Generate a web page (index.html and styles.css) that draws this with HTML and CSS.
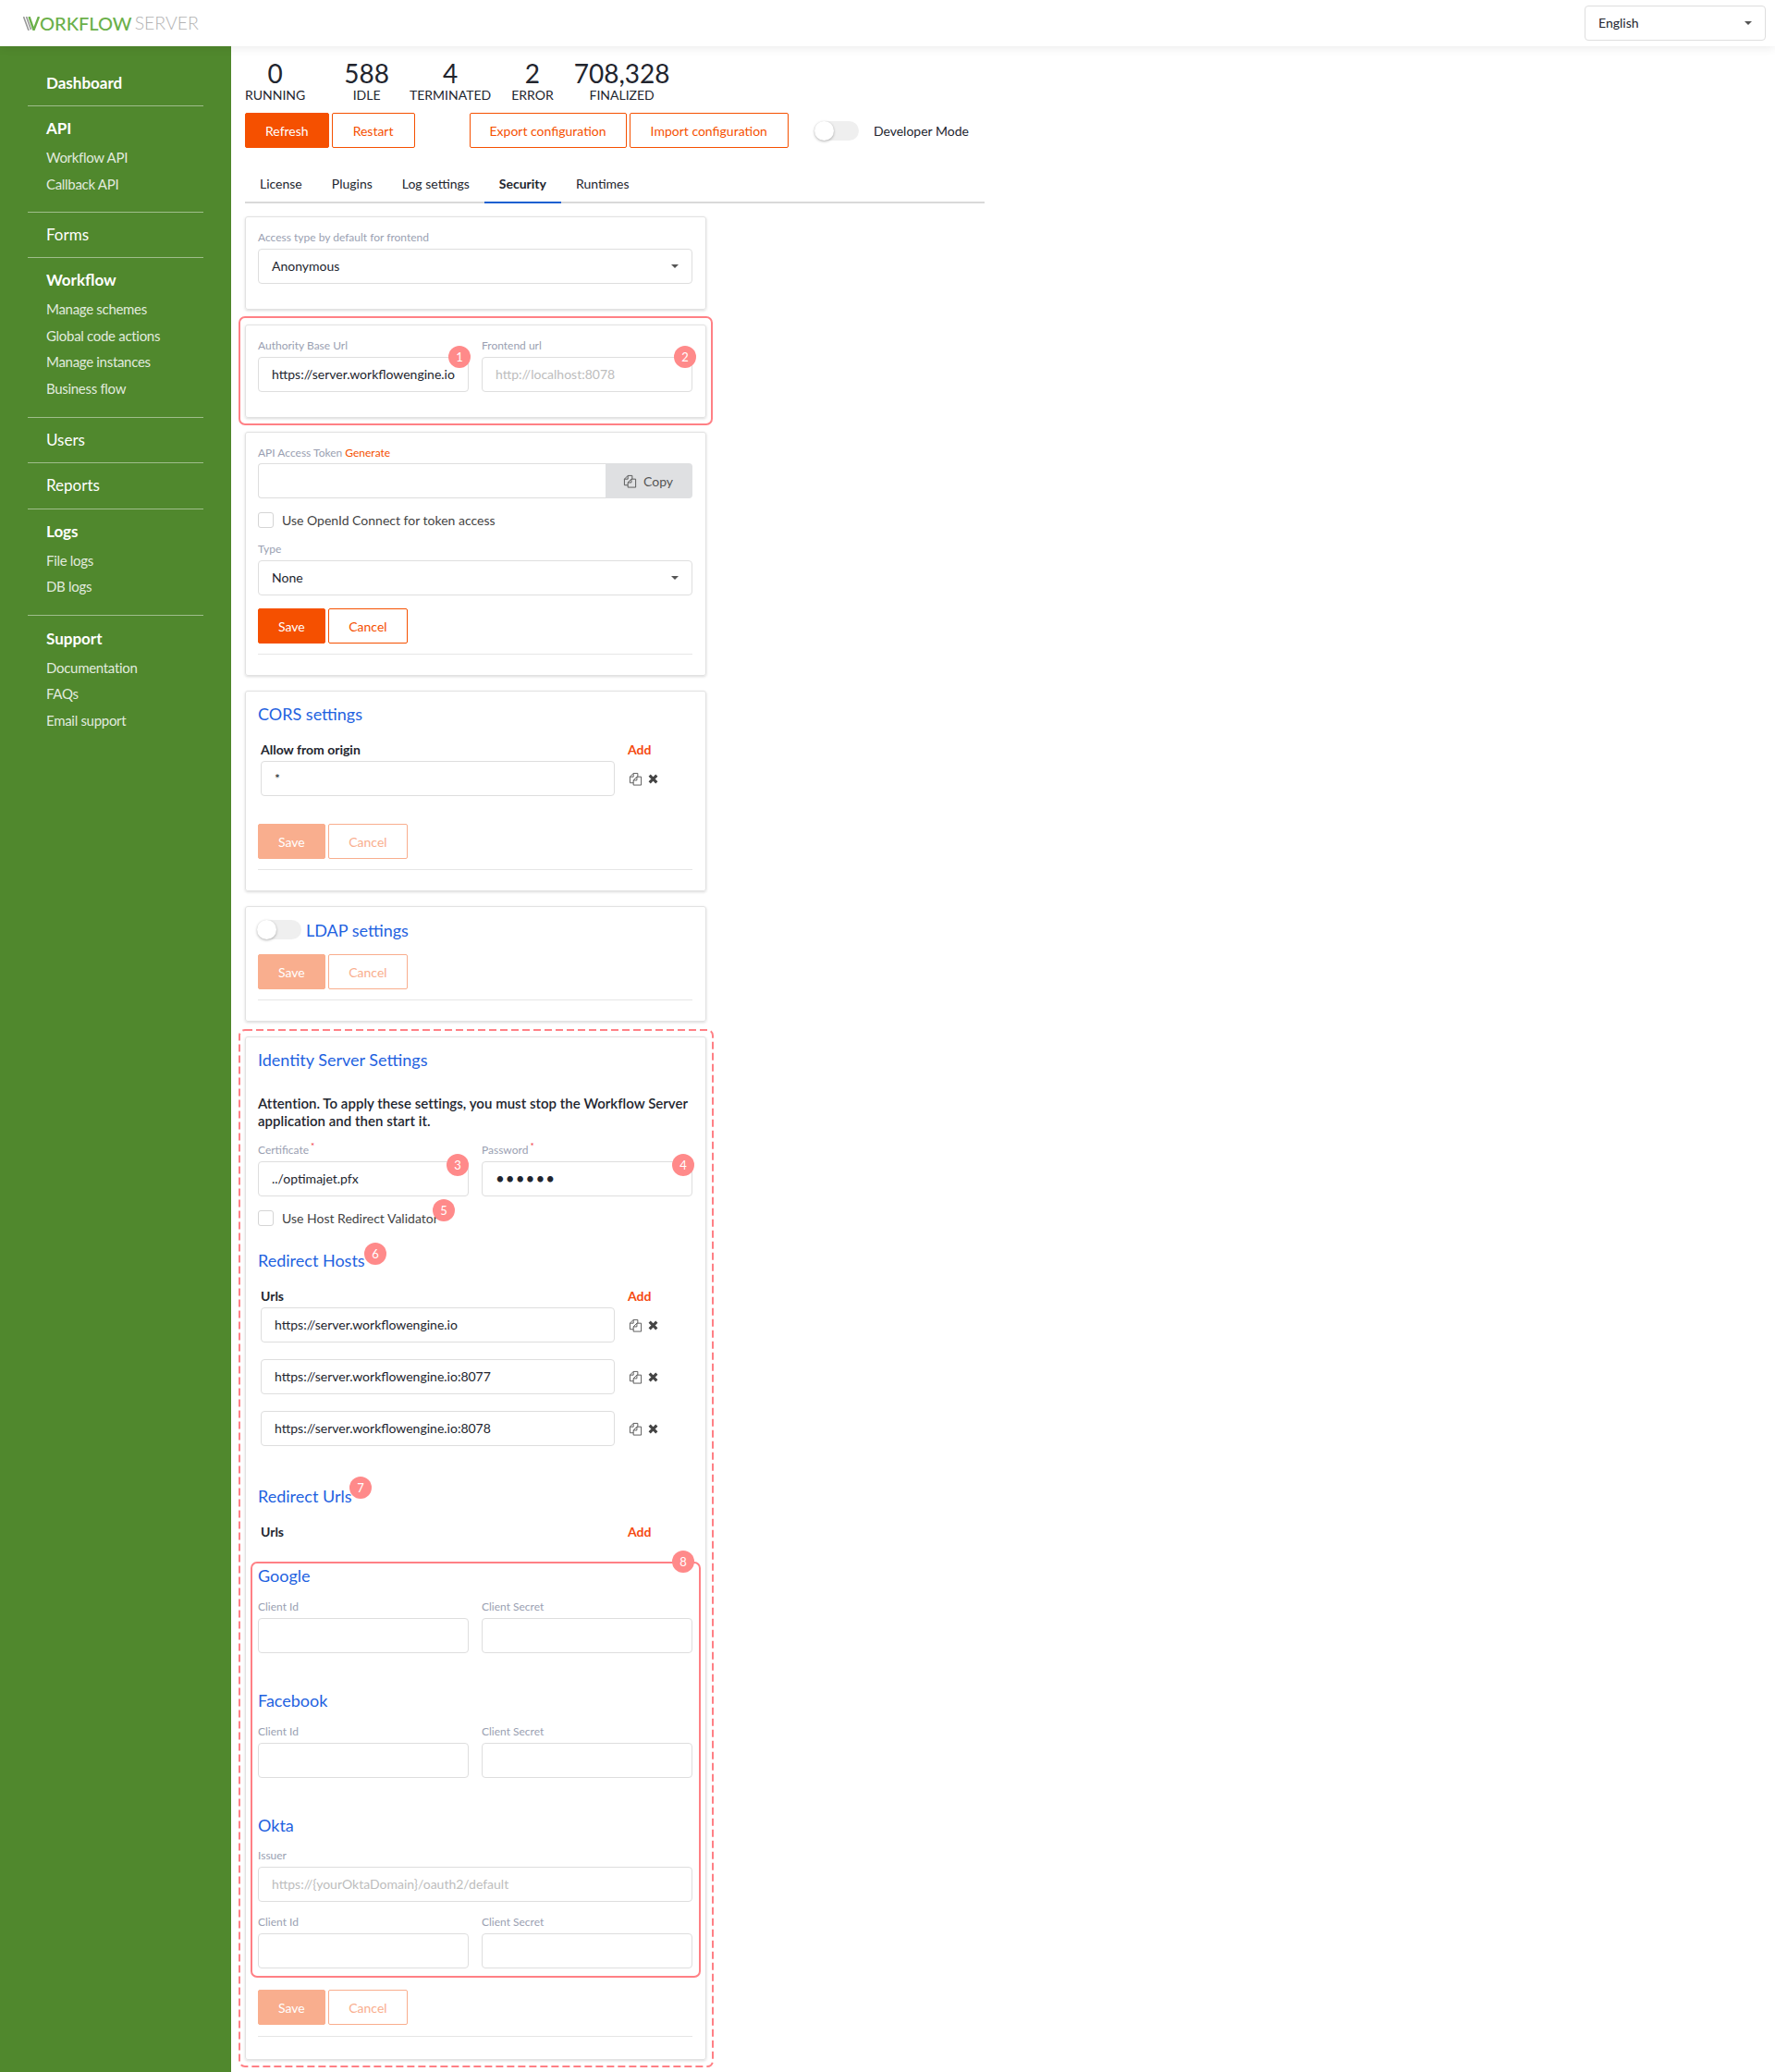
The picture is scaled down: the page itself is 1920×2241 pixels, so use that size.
FILE: index.html
```html
<!DOCTYPE html>
<html lang="en">
<head>
    <meta charset="UTF-8">
    <title>Workflow Server</title>
    <link rel="stylesheet" href="styles.css">
</head>
<body>

<svg class="sprites" width="0" height="0">
    <symbol id="copy" viewBox="0 0 16 16">
        <path d="M5.5 1.5h5v4M5.5 1.5l-4 4v7h4M1.5 5.5h4v-4M9.5 5.5h5v9.5h-9v-5.5zM9.5 5.5v4h-4" fill="none" stroke="currentColor" stroke-width="1"/>
    </symbol>
    <symbol id="cross" viewBox="0 0 10 10">
        <path d="M1.5 1.5l7 7M8.5 1.5l-7 7" fill="none" stroke="currentColor" stroke-width="2.8"/>
    </symbol>
</svg>

<header class="topbar">
    <div class="logo">
        <svg class="logo-mark" viewBox="0 0 18 15">
            <path d="M0.5 0L6 15M3.5 0L8.5 14" fill="none" stroke="#999" stroke-width="1.6"/>
            <path d="M6.5 0L11.5 14.5L17 0" fill="none" stroke="#6bb04a" stroke-width="2.4"/>
        </svg>
        <span class="logo-green">ORKFLOW</span><span class="logo-grey">SERVER</span>
    </div>
    <div class="select lang-select">English<span class="caret"></span></div>
</header>

<div class="layout">
    <nav class="sidebar">
        <div class="nav-section"><a class="nav-head">Dashboard</a></div>
        <div class="nav-section has-links">
            <a class="nav-head">API</a>
            <ul class="nav-links">
                <li>Workflow API</li>
                <li>Callback API</li>
            </ul>
        </div>
        <div class="nav-section"><a class="nav-head plain">Forms</a></div>
        <div class="nav-section has-links">
            <a class="nav-head">Workflow</a>
            <ul class="nav-links">
                <li>Manage schemes</li>
                <li>Global code actions</li>
                <li>Manage instances</li>
                <li>Business flow</li>
            </ul>
        </div>
        <div class="nav-section"><a class="nav-head plain">Users</a></div>
        <div class="nav-section reports"><a class="nav-head plain">Reports</a></div>
        <div class="nav-section has-links">
            <a class="nav-head">Logs</a>
            <ul class="nav-links">
                <li>File logs</li>
                <li>DB logs</li>
            </ul>
        </div>
        <div class="nav-section has-links last">
            <a class="nav-head">Support</a>
            <ul class="nav-links">
                <li>Documentation</li>
                <li>FAQs</li>
                <li>Email support</li>
            </ul>
        </div>
    </nav>

    <main class="content">
        <div class="stats">
            <div class="stat"><div class="stat-num">0</div><div class="stat-label">Running</div></div>
            <div class="stat stat-idle"><div class="stat-num">588</div><div class="stat-label">Idle</div></div>
            <div class="stat"><div class="stat-num">4</div><div class="stat-label">Terminated</div></div>
            <div class="stat"><div class="stat-num">2</div><div class="stat-label">Error</div></div>
            <div class="stat"><div class="stat-num">708,328</div><div class="stat-label">Finalized</div></div>
        </div>

        <div class="toolbar">
            <button class="btn btn-primary">Refresh</button>
            <button class="btn">Restart</button>
            <button class="btn btn-export">Export configuration</button>
            <button class="btn">Import configuration</button>
            <span class="toggle toolbar-toggle"></span>
            <span class="toggle-text">Developer Mode</span>
        </div>

        <div class="tabs">
            <a class="tab">License</a>
            <a class="tab">Plugins</a>
            <a class="tab">Log settings</a>
            <a class="tab active">Security</a>
            <a class="tab">Runtimes</a>
        </div>

        <section class="card">
            <div class="field">
                <label class="field-label">Access type by default for frontend</label>
                <div class="select">Anonymous<span class="caret"></span></div>
            </div>
        </section>

        <section class="card marked">
            <div class="frame frame-solid"></div>
            <div class="field-grid">
                <div class="field">
                    <label class="field-label">Authority Base Url</label>
                    <div class="input">https://server.workflowengine.io</div>
                    <span class="badge badge-1">1</span>
                </div>
                <div class="field">
                    <label class="field-label">Frontend url</label>
                    <div class="input placeholder">http://localhost:8078</div>
                    <span class="badge badge-2">2</span>
                </div>
            </div>
        </section>

        <section class="card token-card">
            <div class="field token-field">
                <label class="field-label">API Access Token <a class="link">Generate</a></label>
                <div class="input-group">
                    <div class="input"></div>
                    <button class="copy-btn"><svg class="icon"><use href="#copy"/></svg>Copy</button>
                </div>
            </div>
            <div class="check-row">
                <span class="checkbox"></span>
                <span>Use OpenId Connect for token access</span>
            </div>
            <div class="field">
                <label class="field-label">Type</label>
                <div class="select">None<span class="caret"></span></div>
            </div>
            <div class="actions">
                <button class="btn btn-primary">Save</button>
                <button class="btn">Cancel</button>
            </div>
        </section>

        <section class="card">
            <h3 class="card-title">CORS settings</h3>
            <div class="list-head"><span class="list-title">Allow from origin</span><a class="link-add">Add</a></div>
            <div class="list-row">
                <div class="input">*</div>
                <span class="row-tools"><svg class="icon"><use href="#copy"/></svg><svg class="icon-x"><use href="#cross"/></svg></span>
            </div>
            <div class="actions disabled after-list">
                <button class="btn btn-primary">Save</button>
                <button class="btn">Cancel</button>
            </div>
        </section>

        <section class="card ldap-card">
            <div class="title-row">
                <span class="toggle"></span>
                <h3 class="card-title">LDAP settings</h3>
            </div>
            <div class="actions disabled">
                <button class="btn btn-primary">Save</button>
                <button class="btn">Cancel</button>
            </div>
        </section>

        <section class="card marked">
            <svg class="frame-dashed"><rect x="1" y="1" width="512" height="1121" rx="6"/></svg>
            <h3 class="card-title">Identity Server Settings</h3>
            <p class="attention">Attention. To apply these settings, you must stop the Workflow Server application and then start it.</p>
            <div class="field-grid">
                <div class="field">
                    <label class="field-label">Certificate<sup class="req">*</sup></label>
                    <div class="input">../optimajet.pfx</div>
                    <span class="badge badge-3">3</span>
                </div>
                <div class="field">
                    <label class="field-label">Password<sup class="req">*</sup></label>
                    <div class="input dots">••••••</div>
                    <span class="badge badge-4">4</span>
                </div>
            </div>
            <div class="check-row validator">
                <span class="checkbox"></span>
                <span>Use Host Redirect Validator</span>
                <span class="badge badge-5">5</span>
            </div>
            <h3 class="card-title sub-title">Redirect Hosts<span class="badge badge-6">6</span></h3>
            <div class="list-head"><span class="list-title">Urls</span><a class="link-add">Add</a></div>
            <div class="list-row">
                <div class="input">https://server.workflowengine.io</div>
                <span class="row-tools"><svg class="icon"><use href="#copy"/></svg><svg class="icon-x"><use href="#cross"/></svg></span>
            </div>
            <div class="list-row">
                <div class="input">https://server.workflowengine.io:8077</div>
                <span class="row-tools"><svg class="icon"><use href="#copy"/></svg><svg class="icon-x"><use href="#cross"/></svg></span>
            </div>
            <div class="list-row">
                <div class="input">https://server.workflowengine.io:8078</div>
                <span class="row-tools"><svg class="icon"><use href="#copy"/></svg><svg class="icon-x"><use href="#cross"/></svg></span>
            </div>
            <h3 class="card-title urls-title">Redirect Urls<span class="badge badge-7">7</span></h3>
            <div class="list-head"><span class="list-title">Urls</span><a class="link-add">Add</a></div>

            <div class="providers">
                <div class="frame frame-providers"></div>
                <span class="badge badge-8">8</span>

                <h3 class="card-title provider-title">Google</h3>
                <div class="field-grid">
                    <div class="field"><label class="field-label">Client Id</label><div class="input"></div></div>
                    <div class="field"><label class="field-label">Client Secret</label><div class="input"></div></div>
                </div>

                <h3 class="card-title provider-title next">Facebook</h3>
                <div class="field-grid">
                    <div class="field"><label class="field-label">Client Id</label><div class="input"></div></div>
                    <div class="field"><label class="field-label">Client Secret</label><div class="input"></div></div>
                </div>

                <h3 class="card-title provider-title next okta">Okta</h3>
                <div class="field issuer">
                    <label class="field-label">Issuer</label>
                    <div class="input placeholder">https://{yourOktaDomain}/oauth2/default</div>
                </div>
                <div class="field-grid">
                    <div class="field"><label class="field-label">Client Id</label><div class="input"></div></div>
                    <div class="field"><label class="field-label">Client Secret</label><div class="input"></div></div>
                </div>
            </div>

            <div class="actions disabled last-actions">
                <button class="btn btn-primary">Save</button>
                <button class="btn">Cancel</button>
            </div>
        </section>
    </main>
</div>

</body>
</html>
```

FILE: styles.css
```css
* {
    box-sizing: border-box;
}

body {
    margin: 0;
    background-color: #fff;
    color: #22252e;
    font-family: Lato, "Open Sans", sans-serif;
    font-size: 14px;
}

.sprites {
    position: absolute;
}

/* top bar */
.topbar {
    position: relative;
    display: flex;
    justify-content: space-between;
    align-items: center;
    height: 50px;
    padding: 0 10px 0 25px;
    box-shadow: 0 2px 10px rgba(0, 0, 0, 0.08);
}

.logo {
    display: flex;
    align-items: center;
    font-size: 20px;
    line-height: 1;
}

.logo-mark {
    width: 18px;
    height: 15px;
}

.logo-green {
    color: #6bb04a;
    font-weight: 500;
}

.logo-grey {
    margin-left: 3px;
    color: #b3b3b3;
    font-size: 19.5px;
    font-weight: 300;
}

.lang-select {
    width: 196px;
}

/* sidebar */
.layout {
    display: flex;
    align-items: stretch;
    min-height: calc(100vh - 50px);
}

.sidebar {
    flex: 0 0 250px;
    padding: 16px 30px 0;
    background-color: #50882d;
    color: #fff;
}

.nav-section {
    padding: 12px 0;
    border-bottom: 1px solid rgba(255, 255, 255, 0.45);
}

.nav-section.has-links {
    padding-bottom: 16px;
}

.nav-section.reports {
    padding-bottom: 13px;
}

.nav-section.last {
    padding-top: 13px;
    border-bottom: none;
}

.nav-head {
    display: block;
    padding-left: 20px;
    font-size: 17px;
    font-weight: 700;
    line-height: 24px;
}

.nav-head.plain {
    font-weight: 400;
}

.nav-links {
    margin: 5px 0 0;
    padding: 0 0 0 20px;
    list-style: none;
    color: rgba(255, 255, 255, 0.85);
    font-size: 15px;
    letter-spacing: -0.3px;
    line-height: 28.6px;
}

/* main */
.content {
    flex: 1;
    padding: 14px 15px 0;
}

.stats {
    display: flex;
    gap: 22px;
}

.stat {
    text-align: center;
}

.stat-idle {
    margin-left: 20px;
}

.stat-num {
    margin-bottom: 2px;
    font-size: 28px;
    line-height: 30px;
}

.stat-label {
    font-size: 14px;
    line-height: 14px;
    text-transform: uppercase;
}

.toolbar {
    display: flex;
    align-items: center;
    gap: 3px;
    margin-top: 12px;
}

.btn {
    height: 38px;
    padding: 0 22px;
    border: 1px solid #f55000;
    border-radius: 2px;
    background-color: #fff;
    color: #f55000;
    font-family: inherit;
    font-size: 14px;
}

.btn-primary {
    padding: 0 21px;
    background-color: #f55000;
    color: #fff;
}

.btn-export {
    margin-left: 56px;
    padding: 0 21px;
}

.toggle {
    display: block;
    position: relative;
    flex: none;
    width: 48px;
    height: 21px;
    border-radius: 11px;
    background-color: #efefef;
}

.toggle::before {
    content: "";
    position: absolute;
    left: 0;
    top: 0;
    width: 21px;
    height: 21px;
    border-radius: 50%;
    background-color: #fff;
    box-shadow: 0 1px 3px rgba(0, 0, 0, 0.3);
}

.toolbar-toggle {
    margin-left: 25px;
}

.toggle-text {
    margin-left: 13px;
}

.tabs {
    display: flex;
    width: 800px;
    height: 40px;
    margin-top: 20px;
    border-bottom: 2px solid #d9d9d9;
}

.tab {
    height: 40px;
    padding: 0 16px;
    line-height: 38px;
}

.tab.active {
    border-bottom: 2px solid #1a5fd0;
    font-weight: 700;
}

/* cards */
.card {
    position: relative;
    width: 499px;
    margin-top: 16px;
    padding: 15px 14px 13px 13px;
    border: 1px solid #e2e2e2;
    border-radius: 3px;
    box-shadow: 0 1px 3px rgba(0, 0, 0, 0.15);
}

.tabs + .card {
    margin-top: 14px;
}

.token-card {
    margin-top: 15px;
}

.ldap-card {
    padding-top: 14px;
}

.card-title {
    margin: 0;
    color: #1f62e0;
    font-size: 18px;
    font-weight: 400;
    line-height: 18px;
}

.field {
    position: relative;
    margin-bottom: 14px;
}

.token-field {
    margin-bottom: 15px;
}

.token-field .field-label {
    margin-bottom: 4px;
}

.field-grid {
    display: grid;
    grid-template-columns: 1fr 1fr;
    gap: 14px;
}

.field-label {
    display: block;
    margin-bottom: 5px;
    color: #9a9fb2;
    font-size: 12px;
    line-height: 14px;
}

.req {
    margin-left: 2px;
    color: #f0303a;
    font-size: 10px;
    line-height: 0;
}

.link {
    color: #f55000;
}

.input,
.select {
    position: relative;
    height: 38px;
    padding: 0 14px;
    border: 1px solid #dedede;
    border-radius: 4px;
    background-color: #fff;
    font-size: 14px;
    line-height: 36px;
    white-space: nowrap;
    overflow: hidden;
}

.placeholder {
    color: #bdbdbd;
}

.dots {
    letter-spacing: 1px;
    font-size: 17px;
}

.caret {
    position: absolute;
    right: 14px;
    top: 16px;
    border-top: 4px solid #555;
    border-left: 4px solid transparent;
    border-right: 4px solid transparent;
}

.input-group {
    display: flex;
}

.input-group .input {
    flex: 1;
    border-right: none;
    border-radius: 4px 0 0 4px;
}

.copy-btn {
    display: flex;
    align-items: center;
    gap: 7px;
    width: 94px;
    height: 38px;
    padding: 0 0 0 19px;
    border: none;
    border-radius: 0 4px 4px 0;
    background-color: #dfe0e2;
    color: #555;
    font-family: inherit;
    font-size: 14px;
}

.icon {
    flex: none;
    width: 15px;
    height: 15px;
    color: #555;
}

.icon-x {
    flex: none;
    width: 11px;
    height: 11px;
    color: #444;
}

.check-row {
    position: relative;
    display: flex;
    align-items: center;
    gap: 9px;
    height: 17px;
    margin: 1px 0 16px;
    color: #444;
    line-height: 17px;
}

.checkbox {
    flex: none;
    width: 17px;
    height: 17px;
    border: 1px solid #d5d5d5;
    border-radius: 3px;
}

.actions {
    display: flex;
    gap: 3px;
    margin-bottom: 9px;
    padding-bottom: 11px;
    border-bottom: 1px solid #e6e6e6;
}

.actions .btn {
    padding: 0 21.5px;
}

.actions .btn-primary {
    padding: 0 21px;
}

.actions.after-list {
    margin-top: 30px;
}

.actions.last-actions {
    margin-bottom: 11px;
    padding-bottom: 12px;
}

.actions.disabled .btn {
    border-color: #f9ae8e;
    color: #f9ae8e;
}

.actions.disabled .btn-primary {
    background-color: #f9ae8e;
    color: #fff;
}

/* url lists */
.list-head {
    display: flex;
    margin: 22px 0 4px 3px;
    line-height: 16px;
}

.list-title {
    width: 397px;
    font-weight: 700;
    font-size: 14px;
}

.link-add {
    color: #f54a10;
    font-weight: 700;
}

.list-row {
    display: flex;
    align-items: center;
    margin: 0 0 18px 3px;
}

.list-row .input {
    width: 383px;
    flex: none;
}

.row-tools {
    display: flex;
    align-items: center;
    gap: 6px;
    margin-left: 15px;
}

.title-row {
    display: flex;
    align-items: center;
    gap: 5px;
    margin-bottom: 16px;
}

.title-row .toggle {
    margin-left: -1px;
}

.attention {
    margin: 29px 0 15px;
    font-size: 15px;
    font-weight: 600;
    letter-spacing: 0.03px;
    line-height: 19px;
}

.validator {
    margin-bottom: 28px;
}

.sub-title,
.urls-title {
    position: relative;
}

.urls-title {
    margin-top: 45px;
}

.providers {
    position: relative;
    margin: 30px 0 9px;
}

.provider-title {
    margin-bottom: 18px;
}

.provider-title.next {
    margin-top: 28px;
}

.provider-title.okta {
    margin-bottom: 17px;
}

.issuer {
    margin-bottom: 15px;
}

/* annotations drawn over the screenshot */
.frame {
    position: absolute;
    border: 2px solid #ff8085;
    border-radius: 7px;
    pointer-events: none;
}

.frame-solid {
    left: -8px;
    right: -8px;
    top: -10px;
    bottom: -9px;
}

.frame-providers {
    left: -8px;
    right: -9px;
    top: -6px;
    bottom: 4px;
}

.frame-dashed {
    position: absolute;
    left: -8px;
    top: -9px;
    width: 514px;
    height: 1123px;
    fill: none;
    stroke: #ff8085;
    stroke-width: 2;
    stroke-dasharray: 8 4;
}

.badge {
    position: absolute;
    width: 24px;
    height: 24px;
    border-radius: 50%;
    background-color: #ff8a8a;
    color: #fff;
    font-size: 13px;
    font-weight: 400;
    line-height: 24px;
    text-align: center;
}

.badge-1 { right: -2px; top: 7px; }
.badge-2 { right: -4px; top: 7px; }
.badge-3 { right: 0; top: 11px; }
.badge-4 { right: -2px; top: 11px; }
.badge-5 { left: 189px; top: -12px; }
.badge-6 { left: 115px; top: -10px; }
.badge-7 { left: 99px; top: -12px; }
.badge-8 { right: -2px; top: -18px; }
```
